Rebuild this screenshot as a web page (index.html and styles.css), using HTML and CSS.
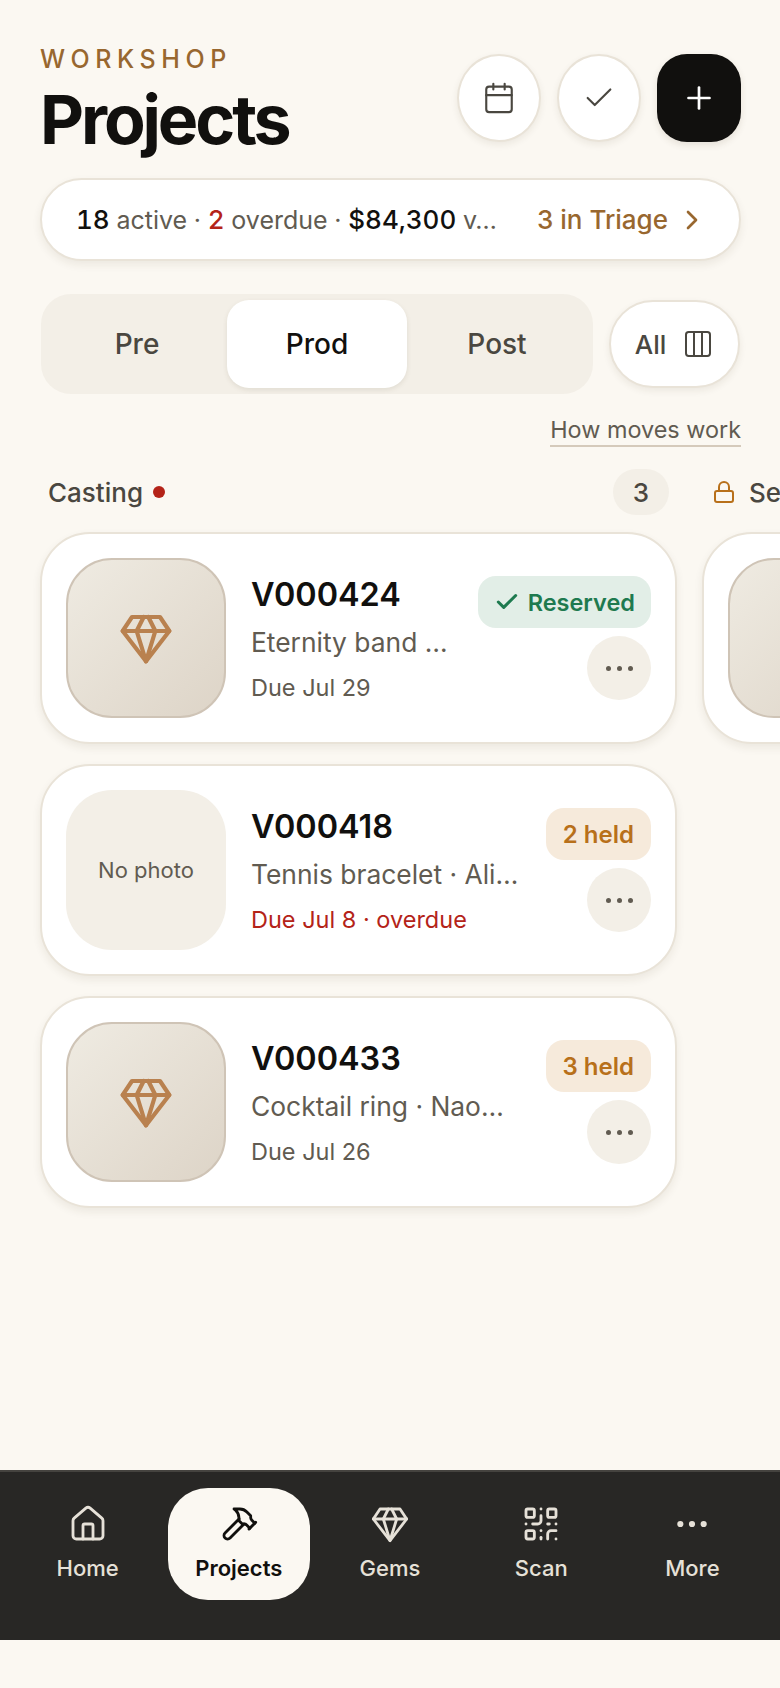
FILE: index.html
```html
<!DOCTYPE html>
<html lang="en">
<head>
<meta charset="utf-8">
<title>Projects</title>
<link rel="stylesheet" href="styles.css">
</head>
<body>
<svg class="defs" width="0" height="0" aria-hidden="true">
  <symbol id="gem" viewBox="0 0 24 24"><path d="M6 3h12l4 6-10 13L2 9Z"/><path d="M11 3 8 9l4 13 4-13-3-6"/><path d="M2 9h20"/></symbol>
</svg>
<main class="screen">
  <header class="top">
    <div class="heading">
      <div class="eyebrow">WORKSHOP</div>
      <h1 class="title">Projects</h1>
    </div>
    <div class="actions">
      <button class="round-btn"><svg class="ico ico-34" viewBox="0 0 24 24"><path d="M8 2v4"/><path d="M16 2v4"/><rect x="3" y="4" width="18" height="18" rx="2"/><path d="M3 10h18"/></svg></button>
      <button class="round-btn"><svg class="ico ico-34" viewBox="0 0 24 24"><path d="M20 6 9 17l-5-5"/></svg></button>
      <button class="add-btn"><svg class="ico ico-36" viewBox="0 0 24 24"><path d="M5 12h14"/><path d="M12 5v14"/></svg></button>
    </div>
  </header>

  <section class="summary">
    <div class="summary-text"><b>18</b> active · <b class="red">2</b> overdue · <b>$84,300</b> v…</div>
    <div class="triage">3 in Triage <svg class="ico ico-30" viewBox="0 0 24 24"><path d="m9 18 6-6-6-6"/></svg></div>
  </section>

  <section class="phase-row">
    <div class="segments">
      <div class="segment">Pre</div>
      <div class="segment active">Prod</div>
      <div class="segment">Post</div>
    </div>
    <button class="all-btn">All <svg class="ico ico-32" viewBox="0 0 24 24"><rect x="3" y="3" width="18" height="18" rx="2"/><path d="M9 3v18"/><path d="M15 3v18"/></svg></button>
  </section>

  <div class="help-row"><a class="help">How moves work</a></div>

  <section class="board">
    <div class="column">
      <div class="col-head">
        <div class="col-name">Casting <span class="dot"></span></div>
        <div class="count">3</div>
      </div>
      <article class="card">
        <div class="thumb"><svg class="gem-ico"><use href="#gem"/></svg></div>
        <div class="info">
          <div class="code">V000424</div>
          <div class="desc">Eternity band …</div>
          <div class="due">Due Jul 29</div>
        </div>
        <div class="side">
          <div class="badge green"><svg class="ico ico-24" viewBox="0 0 24 24"><path d="M20 6 9 17l-5-5"/></svg>Reserved</div>
          <button class="more"><i></i><i></i><i></i></button>
        </div>
      </article>
      <article class="card">
        <div class="thumb empty">No photo</div>
        <div class="info">
          <div class="code">V000418</div>
          <div class="desc">Tennis bracelet · Ali…</div>
          <div class="due red">Due Jul 8 · overdue</div>
        </div>
        <div class="side">
          <div class="badge amber">2 held</div>
          <button class="more"><i></i><i></i><i></i></button>
        </div>
      </article>
      <article class="card">
        <div class="thumb"><svg class="gem-ico"><use href="#gem"/></svg></div>
        <div class="info">
          <div class="code">V000433</div>
          <div class="desc">Cocktail ring · Nao…</div>
          <div class="due">Due Jul 26</div>
        </div>
        <div class="side">
          <div class="badge amber">3 held</div>
          <button class="more"><i></i><i></i><i></i></button>
        </div>
      </article>
    </div>
    <div class="column">
      <div class="col-head">
        <div class="col-name"><svg class="ico ico-lock" viewBox="0 0 24 24"><rect x="3" y="11" width="18" height="11" rx="2"/><path d="M7 11V7a5 5 0 0 1 10 0v4"/></svg> Setting</div>
      </div>
      <article class="card">
        <div class="thumb"></div>
      </article>
    </div>
  </section>
</main>

<nav class="tabbar">
  <a class="tab"><svg class="ico tab-ico" viewBox="0 0 24 24"><path d="M15 21v-8a1 1 0 0 0-1-1h-4a1 1 0 0 0-1 1v8"/><path d="M3 10a2 2 0 0 1 .709-1.528l7-5.999a2 2 0 0 1 2.582 0l7 5.999A2 2 0 0 1 21 10v9a2 2 0 0 1-2 2H5a2 2 0 0 1-2-2z"/></svg>Home</a>
  <a class="tab current"><svg class="ico tab-ico" viewBox="0 0 24 24"><path d="m15 12-8.373 8.373a1 1 0 1 1-3-3L12 9"/><path d="m18 15 4-4"/><path d="m21.5 11.5-1.914-1.914A2 2 0 0 1 19 8.172V7l-2.26-2.26a6 6 0 0 0-4.202-1.756L9 2.96l.92.82A6.18 6.18 0 0 1 12 8.4V10l2 2h1.172a2 2 0 0 1 1.414.586L18.5 14.5"/></svg>Projects</a>
  <a class="tab"><svg class="ico tab-ico"><use href="#gem"/></svg>Gems</a>
  <a class="tab"><svg class="ico tab-ico" viewBox="0 0 24 24"><rect x="3" y="3" width="5" height="5" rx="1"/><rect x="16" y="3" width="5" height="5" rx="1"/><rect x="3" y="16" width="5" height="5" rx="1"/><path d="M21 16h-3a2 2 0 0 0-2 2v3"/><path d="M21 21v.01"/><path d="M12 7v3a2 2 0 0 1-2 2H7"/><path d="M3 12h.01"/><path d="M12 3h.01"/><path d="M12 16v.01"/><path d="M16 12h1"/><path d="M21 12v.01"/><path d="M12 21v-1"/></svg>Scan</a>
  <a class="tab"><svg class="ico tab-ico dots" viewBox="0 0 24 24"><circle cx="12" cy="12" r="1"/><circle cx="19" cy="12" r="1"/><circle cx="5" cy="12" r="1"/></svg>More</a>
</nav>
<div class="home-strip"></div>
</body>
</html>
```

FILE: styles.css
```css
* { box-sizing: border-box; }
html, body { margin: 0; height: 100%; }
body {
  width: 780px;
  height: 1688px;
  overflow: hidden;
  display: flex;
  flex-direction: column;
  background: #fbf8f2;
  color: #11100e;
  font-family: Inter, "Liberation Sans", sans-serif;
}
button { font-family: inherit; color: inherit; padding: 0; cursor: pointer; }
.defs { position: absolute; }

.ico {
  fill: none;
  stroke: currentColor;
  stroke-width: 1.5;
  stroke-linecap: round;
  stroke-linejoin: round;
  flex: none;
  display: block;
}
.ico-24 { width: 26px; height: 26px; stroke-width: 2.8; }
.ico-30 { width: 32px; height: 32px; stroke-width: 2; }
.ico-32 { width: 32px; height: 32px; }
.ico-34 { width: 34px; height: 34px; }
.ico-36 { width: 36px; height: 36px; stroke-width: 1.8; }

.screen { flex: 1; min-height: 0; display: flex; flex-direction: column; padding: 47px 0 0 40px; }

.top { display: flex; justify-content: space-between; padding-right: 39px; height: 123px; }
.eyebrow { font-size: 25px; line-height: 24px; font-weight: 500; letter-spacing: 5.6px; color: #98672f; }
.title { margin: 9px 0 0; font-size: 68px; line-height: 78px; font-weight: 700; letter-spacing: -3.1px; color: #11100e; }
.actions { display: flex; align-items: center; gap: 16px; height: 102px; }
.round-btn {
  width: 84px; height: 88px; border-radius: 50%;
  border: 2px solid #e9e3d8; background: #fff;
  display: flex; align-items: center; justify-content: center;
  color: #4a4740;
  box-shadow: 0 3px 7px rgba(70, 55, 30, .08);
}
.add-btn {
  width: 84px; height: 88px; border-radius: 30px; border: 0;
  background: #11100e; color: #fff;
  display: flex; align-items: center; justify-content: center;
  box-shadow: 0 3px 7px rgba(70, 55, 30, .12);
}

.summary {
  width: 701px; height: 83px; margin-top: 8px;
  border: 2px solid #e9e3d8; border-radius: 42px; background: #fff;
  box-shadow: 0 4px 9px rgba(70, 55, 30, .08);
  display: flex; align-items: center; justify-content: space-between;
  padding: 0 31px 0 34px;
  font-size: 26px; white-space: nowrap;
}
.summary-text { color: #615b51; font-size: 25px; font-variant-numeric: tabular-nums; }
.summary-text b { font-size: 26px; font-weight: 500; color: #11100e; }
.summary-text b.red { color: #b42318; }
.triage { display: flex; align-items: center; gap: 8px; color: #98672f; font-weight: 500; }

.phase-row { display: flex; align-items: center; gap: 16px; margin: 33px 0 0 1px; }
.segments {
  width: 552px; height: 100px; border-radius: 30px; background: #f3efe7;
  display: grid; grid-template-columns: repeat(3, 180px); align-items: center;
  padding: 0 6px;
}
.segment { height: 88px; display: flex; align-items: center; justify-content: center; font-size: 28px; font-weight: 500; color: #4a4740; border-radius: 22px; }
.segment.active { background: #fff; color: #11100e; box-shadow: 0 2px 5px rgba(70, 55, 30, .1); }
.all-btn {
  width: 131px; height: 88px; border-radius: 44px;
  border: 2px solid #e9e3d8; background: #fff;
  display: flex; align-items: center; justify-content: center; gap: 16px;
  font-size: 26px; font-weight: 500; color: #4a4740;
  box-shadow: 0 3px 7px rgba(70, 55, 30, .08);
}

.help-row { display: flex; justify-content: flex-end; padding-right: 39px; margin-top: 21px; }
.help { font-size: 23.4px; line-height: 30px; color: #615b51; border-bottom: 2px solid #d5cabb; }

.board { display: flex; gap: 25px; margin-top: 22px; }
.column { width: 637px; flex: none; display: flex; flex-direction: column; gap: 20px; }
.col-head { height: 46px; margin-bottom: -3px; display: flex; align-items: center; justify-content: space-between; padding: 0 8px; }
.col-name { display: flex; align-items: center; gap: 10px; font-size: 26px; font-weight: 500; color: #4a4740; }
.dot { width: 12px; height: 12px; border-radius: 50%; background: #b42318; }
.count { width: 56px; height: 46px; border-radius: 23px; background: #f3efe7; display: flex; align-items: center; justify-content: center; font-size: 26px; font-weight: 500; color: #4a4740; }
.ico-lock { width: 24px; height: 24px; color: #b8701a; stroke-width: 2; margin: 0 3px 0 2px; }

.card {
  width: 637px; height: 212px; flex: none;
  border: 2px solid #e9e3d8; border-radius: 50px; background: #fff;
  box-shadow: 0 4px 9px rgba(70, 55, 30, .08);
  display: flex; align-items: center; padding: 0 24px;
}
.thumb {
  width: 160px; height: 160px; flex: none; border-radius: 46px;
  border: 2px solid #cfc4b6;
  background: linear-gradient(135deg, #efebe2, #ddd4c7);
  display: flex; align-items: center; justify-content: center;
}
.thumb.empty { border: 0; background: #f3efe7; font-size: 22px; color: #615b51; }
.gem-ico { width: 56px; height: 56px; fill: none; stroke: #b9814f; stroke-width: 1.8; stroke-linecap: round; stroke-linejoin: round; }
.info { flex: 1; min-width: 0; margin-left: 25px; white-space: nowrap; }
.code { font-size: 32.4px; line-height: 42px; font-weight: 600; color: #11100e; }
.desc { font-size: 26.4px; line-height: 34px; margin-top: 9px; color: #615b51; }
.due { font-size: 23.5px; line-height: 30px; margin-top: 14px; font-weight: 400; color: #615b51; }
.due.red { color: #b42318; }
.side { display: flex; flex-direction: column; align-items: flex-end; gap: 8px; }
.badge { height: 52px; border-radius: 18px; padding: 0 16px; display: flex; align-items: center; gap: 8px; font-size: 23.5px; font-weight: 600; white-space: nowrap; }
.badge.green { background: #e2eee7; color: #1e7a4f; }
.badge.amber { background: #f6eadb; color: #b8701a; font-size: 24px; padding: 0 17px; }
.more {
  width: 64px; height: 64px; border-radius: 50%; border: 0; background: #f3efe7;
  display: flex; align-items: center; justify-content: center; gap: 6px;
}
.more i { width: 5px; height: 5px; border-radius: 50%; background: #615b51; }

.tabbar {
  height: 170px; flex: none;
  background: #282725; border-top: 2px solid #45433f;
  display: grid; grid-template-columns: repeat(5, 1fr); align-items: start;
  padding: 16px 12px 0;
}
.tab {
  height: 112px; margin: 0 4.5px; border-radius: 40px;
  display: flex; flex-direction: column; align-items: center; justify-content: center; gap: 11px;
  padding-bottom: 3px;
  font-size: 22px; font-weight: 500; color: #e6e1d8;
}
.tab.current { background: #fbf8f2; color: #11100e; font-weight: 600; }
.tab .ico { width: 40px; height: 40px; stroke-width: 1.7; }
.tab .ico.dots { fill: currentColor; }
.home-strip { height: 48px; flex: none; background: #fbf8f2; }
```
